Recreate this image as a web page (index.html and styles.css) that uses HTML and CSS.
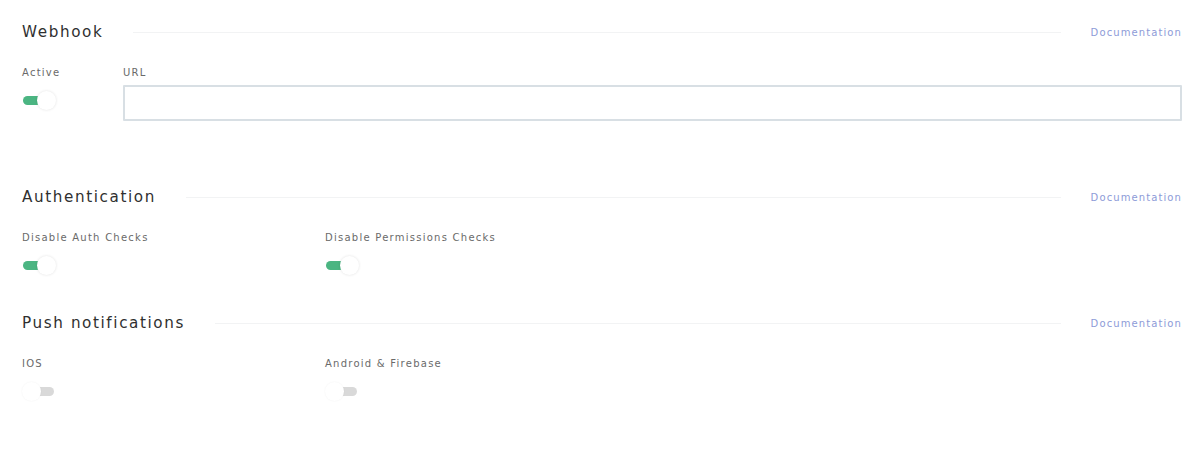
FILE: index.html
```html
<!DOCTYPE html>
<html>
<head>
<meta charset="utf-8">
<link rel="stylesheet" href="styles.css">
</head>
<body>
<div class="page">
  <section class="section webhook">
    <div class="head">
      <h2 class="title">Webhook</h2>
      <div class="rule"></div>
      <a class="doc" href="#">Documentation</a>
    </div>
    <div class="row">
      <div class="field col-active">
        <label class="label">Active</label>
        <span class="toggle on"><span class="knob"></span></span>
      </div>
      <div class="field col-url">
        <label class="label">URL</label>
        <input class="input" type="text">
      </div>
    </div>
  </section>

  <section class="section auth">
    <div class="head">
      <h2 class="title">Authentication</h2>
      <div class="rule"></div>
      <a class="doc" href="#">Documentation</a>
    </div>
    <div class="row">
      <div class="field col-half">
        <label class="label">Disable Auth Checks</label>
        <span class="toggle on"><span class="knob"></span></span>
      </div>
      <div class="field col-half">
        <label class="label">Disable Permissions Checks</label>
        <span class="toggle on"><span class="knob"></span></span>
      </div>
    </div>
  </section>

  <section class="section push">
    <div class="head">
      <h2 class="title">Push notifications</h2>
      <div class="rule"></div>
      <a class="doc" href="#">Documentation</a>
    </div>
    <div class="row">
      <div class="field col-half">
        <label class="label">IOS</label>
        <span class="toggle off"><span class="knob"></span></span>
      </div>
      <div class="field col-half">
        <label class="label">Android &amp; Firebase</label>
        <span class="toggle off"><span class="knob"></span></span>
      </div>
    </div>
  </section>
</div>
</body>
</html>
```
FILE: styles.css
```css
html, body {
  margin: 0;
  padding: 0;
  background: #ffffff;
}
body {
  font-family: "DejaVu Sans", "Liberation Sans", sans-serif;
  color: #333;
}
.page {
  padding: 20px 15px 0 22px;
}
.section {
  display: flex;
  flex-direction: column;
}
.head {
  display: flex;
  align-items: center;
  height: 24px;
}
.title {
  margin: 0;
  font-size: 15.2px;
  font-weight: 500;
  letter-spacing: 1.6px;
  color: #2f2f2f;
  white-space: nowrap;
}
.rule {
  flex: 1;
  height: 1px;
  background: #f2f3f4;
  margin: 0 30px;
}
.doc {
  font-size: 10px;
  color: #8d9bd8;
  text-decoration: none;
  letter-spacing: 1.1px;
}
.row {
  display: flex;
  margin-top: 22px;
}
.field {
  display: flex;
  flex-direction: column;
}
.col-active {
  width: 101px;
}
.col-url {
  flex: 1;
}
.col-half {
  width: 303px;
}
.label {
  font-size: 10px;
  letter-spacing: 1.25px;
  color: #6a6a6a;
  height: 14px;
  line-height: 14px;
  white-space: nowrap;
}
.input {
  margin-top: 5px;
  height: 36px;
  box-sizing: border-box;
  border: 2px solid #d8dfe4;
  border-radius: 1px;
  background: #fff;
  outline: none;
}
.toggle {
  position: relative;
  display: block;
  width: 36px;
  height: 22px;
  margin-top: 9px;
}
.toggle::before {
  content: "";
  position: absolute;
  top: 7px;
  height: 9px;
  width: 18px;
  border-radius: 5px;
}
.toggle.on::before {
  left: 1px;
  background: #4bb582;
}
.toggle.off::before {
  left: 14px;
  background: #d9d9d9;
}
.knob {
  position: absolute;
  top: 2px;
  width: 19px;
  height: 19px;
  border-radius: 50%;
  background: #fff;
  box-shadow: 0 0 3px rgba(0, 0, 0, 0.12);
}
.toggle.on .knob {
  left: 15px;
}
.toggle.off .knob {
  left: 0;
  box-shadow: 0 0 2px rgba(0, 0, 0, 0.06);
}
.webhook {
  height: 165px;
}
.auth {
  height: 126px;
}
```
